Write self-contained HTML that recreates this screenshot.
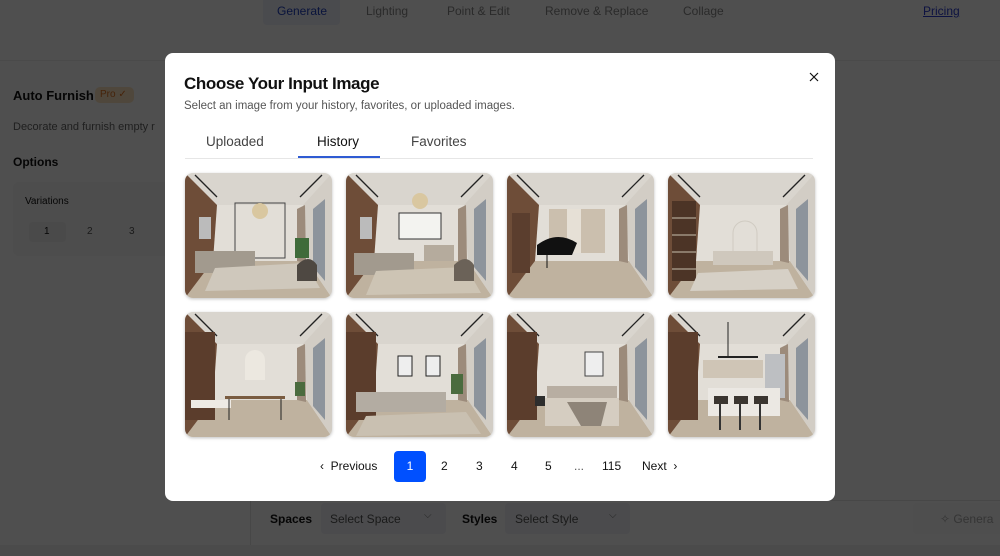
<!DOCTYPE html>
<html><head><meta charset="utf-8"><style>
*{box-sizing:border-box;margin:0;padding:0}
html,body{background:#fff}
body{width:1000px;height:556px;overflow:hidden;font-family:"Liberation Sans",sans-serif;position:relative}
.a{position:absolute;white-space:nowrap}
.ov{position:absolute;left:0;top:0;width:1000px;height:556px;background:rgba(0,0,0,0.69);z-index:5}
.modal{position:absolute;left:165px;top:53px;width:670px;height:448px;background:#fff;border-radius:8px;z-index:6}
.m{z-index:7}
.img{position:absolute;width:147px;height:125px;border-radius:8px;overflow:hidden;box-shadow:0 1px 3px rgba(0,0,0,.25);z-index:7}
.img svg{display:block}
.pg{position:absolute;top:466px;font-size:12px;color:#111;transform:translateY(-50%);z-index:7;white-space:nowrap}
</style></head><body>
<div class="a" style="left:263px;top:0;width:77px;height:25px;background:#eef1fb;border-radius:0 0 4px 4px"></div>
<div class="a" style="left:277px;top:4px;font-size:12px;color:#2040c0">Generate</div>
<div class="a" style="left:366px;top:4px;font-size:12px;color:#888">Lighting</div>
<div class="a" style="left:447px;top:4px;font-size:12px;color:#888">Point &amp; Edit</div>
<div class="a" style="left:545px;top:4px;font-size:12px;color:#888">Remove &amp; Replace</div>
<div class="a" style="left:683px;top:4px;font-size:12px;color:#888">Collage</div>
<div class="a" style="left:923px;top:4px;font-size:12px;color:#2a3cd0;text-decoration:underline">Pricing</div>
<div class="a" style="left:0;top:60px;width:1000px;height:1px;background:#eee"></div>
<div class="a" style="left:13px;top:88px;font-size:13px;font-weight:bold;color:#111">Auto Furnish</div>
<div class="a" style="left:95px;top:87px;width:39px;height:16px;background:#fde6c0;border-radius:5px;font-size:10px;color:#e07020;padding:2px 0 0 5px">Pro ✓</div>
<div class="a" style="left:13px;top:121px;font-size:11px;color:#666">Decorate and furnish empty r</div>
<div class="a" style="left:13px;top:155px;font-size:12px;font-weight:bold;color:#111">Options</div>
<div class="a" style="left:13px;top:182px;width:160px;height:74px;background:#f7f7f7;border-radius:6px"></div>
<div class="a" style="left:25px;top:196px;font-size:10px;color:#111">Variations</div>
<div class="a" style="left:29px;top:222px;width:37px;height:20px;background:#eee;border-radius:4px"></div>
<div class="a" style="left:44px;top:226px;font-size:10px;color:#111">1</div>
<div class="a" style="left:87px;top:226px;font-size:10px;color:#555">2</div>
<div class="a" style="left:129px;top:226px;font-size:10px;color:#555">3</div>
<div class="a" style="left:250px;top:500px;width:750px;height:1px;background:#e4e4e4"></div>
<div class="a" style="left:250px;top:500px;width:1px;height:56px;background:#e4e4e4"></div>
<div class="a" style="left:270px;top:512px;font-size:12px;font-weight:bold;color:#111">Spaces</div>
<div class="a" style="left:321px;top:503px;width:125px;height:31px;background:#f1f3f8;border-radius:4px"></div>
<div class="a" style="left:330px;top:512px;font-size:12px;color:#555">Select Space</div>
<div class="a" style="left:424px;top:510px;font-size:10px;color:#777">⌵</div>
<div class="a" style="left:462px;top:512px;font-size:12px;font-weight:bold;color:#111">Styles</div>
<div class="a" style="left:505px;top:503px;width:125px;height:31px;background:#f1f3f8;border-radius:4px"></div>
<div class="a" style="left:515px;top:512px;font-size:12px;color:#555">Select Style</div>
<div class="a" style="left:609px;top:510px;font-size:10px;color:#777">⌵</div>
<div class="a" style="left:913px;top:503px;width:90px;height:31px;background:#fafafa;border-radius:4px"></div>
<div class="a" style="left:940px;top:512px;font-size:12px;color:#aaa">✧ Genera</div>
<div class="a" style="left:0;top:545px;width:1000px;height:11px;background:#f0f0f0"></div>

<div class="ov"></div>
<div class="modal"></div>
<div class="a m" style="left:184px;top:74px;font-size:17px;font-weight:bold;color:#111;letter-spacing:-0.4px">Choose Your Input Image</div>
<div class="a m" style="left:184px;top:100px;font-size:11.5px;color:#555">Select an image from your history, favorites, or uploaded images.</div>
<svg class="a m" style="left:809px;top:72px" width="10" height="10" viewBox="0 0 10 10"><path d="M1 1L9 9M9 1L1 9" stroke="#111" stroke-width="1.2"/></svg>
<div class="a m" style="left:206px;top:134px;font-size:13.5px;color:#444">Uploaded</div>
<div class="a m" style="left:317px;top:134px;font-size:13.5px;color:#111">History</div>
<div class="a m" style="left:411px;top:134px;font-size:13.5px;color:#444">Favorites</div>
<div class="a m" style="left:185px;top:158px;width:628px;height:1px;background:#e6e6e6"></div>
<div class="a m" style="left:298px;top:156px;width:82px;height:2px;background:#2f5bd3"></div>

<svg width="0" height="0" style="position:absolute"><defs>
<symbol id="room" viewBox="0 0 147 125">
<rect width="147" height="125" fill="#e2ded7"/>
<polygon points="0,0 147,0 118,32 32,32" fill="#d9d5ce"/>
<polygon points="0,125 147,125 122,88 28,88" fill="#bfb29f"/>
<polygon points="0,0 32,32 28,88 0,125" fill="#6e4d38"/>
<polygon points="147,0 118,32 122,88 147,125" fill="#d2cdc5"/>
<polygon points="128,36 140,26 140,108 128,94" fill="#8d949c"/>
<polygon points="112,36 120,32 121,90 112,88" fill="#9c8b7b"/>
<line x1="10" y1="2" x2="32" y2="24" stroke="#222" stroke-width="1.3"/>
<line x1="137" y1="2" x2="115" y2="24" stroke="#222" stroke-width="1.3"/>
</symbol>
</defs></svg>

<div class="img" style="left:185px;top:173px"><svg width="147" height="125"><use href="#room"/><rect x="14" y="44" width="12" height="22" fill="#bbb"/><rect x="50" y="30" width="50" height="55" fill="none" stroke="#444"/><circle cx="75" cy="38" r="8" fill="#d9c7a0"/><rect x="10" y="78" width="60" height="22" fill="#a29a8e"/><rect x="110" y="65" width="14" height="20" fill="#3f6b3a"/><path d="M30 95 L120 90 L135 115 L20 118Z" fill="#cfc8bc"/><path d="M112 92 q12 -12 20 0 v16 h-20z" fill="#4e4842"/></svg></div>
<div class="img" style="left:346px;top:173px"><svg width="147" height="125"><use href="#room"/><rect x="14" y="44" width="12" height="22" fill="#bbb"/><rect x="53" y="40" width="42" height="26" fill="#f3f3f0" stroke="#333"/><circle cx="74" cy="28" r="8" fill="#d9c7a0"/><rect x="8" y="80" width="60" height="22" fill="#a29a8e"/><rect x="78" y="72" width="30" height="16" fill="#b5ab9d"/><path d="M30 98 L120 94 L135 120 L20 122Z" fill="#cdc4b4"/><path d="M108 92 q12 -12 20 0 v16 h-20z" fill="#6b6258"/></svg></div>
<div class="img" style="left:507px;top:173px"><svg width="147" height="125"><use href="#room"/><rect x="5" y="40" width="18" height="60" fill="#5b3e2e"/><rect x="42" y="36" width="56" height="44" fill="#cbbfae"/><rect x="60" y="36" width="14" height="44" fill="#e6e0d6"/><path d="M30 72 q20 -15 40 -2 l-5 12 h-35z" fill="#111"/><line x1="40" y1="82" x2="40" y2="95" stroke="#111"/></svg></div>
<div class="img" style="left:668px;top:173px"><svg width="147" height="125"><use href="#room"/><rect x="4" y="28" width="24" height="80" fill="#4c3426"/><g stroke="#c9bfae" stroke-width="1"><line x1="4" y1="45" x2="28" y2="45"/><line x1="4" y1="62" x2="28" y2="62"/><line x1="4" y1="79" x2="28" y2="79"/><line x1="4" y1="96" x2="28" y2="96"/></g><path d="M65 80 v-20 a12 12 0 0 1 24 0 v20z" fill="none" stroke="#d0cbc2"/><rect x="45" y="78" width="60" height="14" fill="#cfc8bd"/><path d="M30 100 L120 96 L130 116 L22 118Z" fill="#d6d0c6"/></svg></div>
<div class="img" style="left:185px;top:312px"><svg width="147" height="125"><use href="#room"/><rect x="0" y="20" width="30" height="88" fill="#5b3d2c"/><rect x="6" y="88" width="40" height="8" fill="#eeeae4"/><path d="M60 68 v-20 a10 10 0 0 1 20 0 v20z" fill="#ece8e0"/><rect x="40" y="84" width="60" height="3" fill="#7a5c40"/><line x1="44" y1="87" x2="44" y2="108" stroke="#222"/><line x1="96" y1="87" x2="96" y2="108" stroke="#222"/><rect x="110" y="70" width="10" height="14" fill="#4a6b3e"/></svg></div>
<div class="img" style="left:346px;top:312px"><svg width="147" height="125"><use href="#room"/><rect x="0" y="20" width="30" height="88" fill="#5b3d2c"/><rect x="52" y="44" width="14" height="20" fill="#eee" stroke="#222"/><rect x="80" y="44" width="14" height="20" fill="#eee" stroke="#222"/><rect x="10" y="80" width="90" height="20" fill="#b3aca2"/><path d="M20 104 L120 100 L135 122 L10 124Z" fill="#c9c0b1"/><rect x="105" y="62" width="12" height="20" fill="#4a6b3e"/></svg></div>
<div class="img" style="left:507px;top:312px"><svg width="147" height="125"><use href="#room"/><rect x="0" y="20" width="30" height="88" fill="#5b3d2c"/><rect x="78" y="40" width="18" height="24" fill="#eee" stroke="#444"/><rect x="40" y="74" width="70" height="14" fill="#b8aea2"/><rect x="38" y="86" width="74" height="28" fill="#d5cdc1"/><path d="M60 90 l40 0 l-6 24 h-20z" fill="#8e8478"/><rect x="28" y="84" width="10" height="10" fill="#2d2d2d"/></svg></div>
<div class="img" style="left:668px;top:312px"><svg width="147" height="125"><use href="#room"/><rect x="0" y="20" width="30" height="88" fill="#5b3d2c"/><rect x="35" y="48" width="60" height="18" fill="#cfc5b6"/><rect x="97" y="42" width="20" height="44" fill="#bdbfc2"/><line x1="60" y1="10" x2="60" y2="45" stroke="#222"/><line x1="50" y1="45" x2="90" y2="45" stroke="#222" stroke-width="2"/><rect x="40" y="76" width="72" height="28" fill="#ebe8e3"/><g stroke="#333" stroke-width="2"><line x1="52" y1="90" x2="52" y2="118"/><line x1="72" y1="90" x2="72" y2="118"/><line x1="92" y1="90" x2="92" y2="118"/></g><rect x="46" y="84" width="14" height="8" fill="#3a3530"/><rect x="66" y="84" width="14" height="8" fill="#3a3530"/><rect x="86" y="84" width="14" height="8" fill="#3a3530"/></svg></div>

<div class="pg" style="left:320px">‹&nbsp; Previous</div>
<div class="a m" style="left:394px;top:451px;width:32px;height:31px;background:#0050ff;border-radius:4px;color:#fff;font-size:12px;text-align:center;line-height:31px">1</div>
<div class="pg" style="left:441px">2</div>
<div class="pg" style="left:476px">3</div>
<div class="pg" style="left:511px">4</div>
<div class="pg" style="left:545px">5</div>
<div class="pg" style="left:574px;color:#555">...</div>
<div class="pg" style="left:602px">115</div>
<div class="pg" style="left:642px">Next &nbsp;›</div>
</body></html>
